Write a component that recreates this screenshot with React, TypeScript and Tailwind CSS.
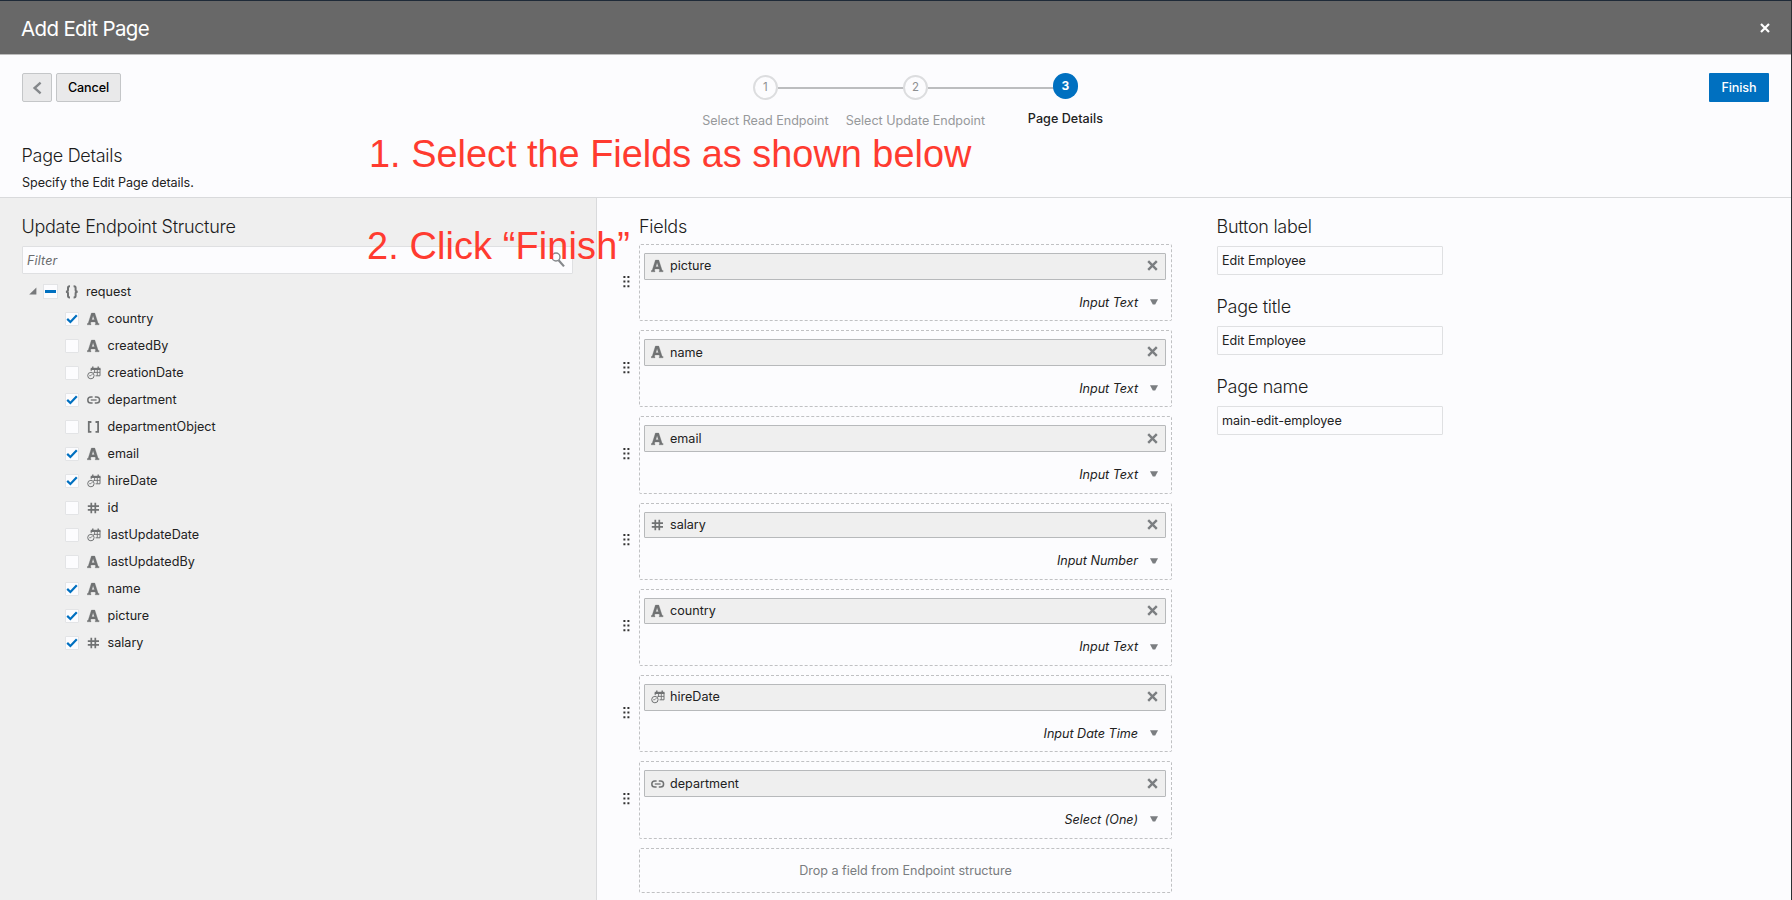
import React from "react";

type Kind = "text" | "date" | "link" | "array" | "number" | "object";

function KindIcon({ kind }: { kind: Kind }) {
  const c = "#707273";
  return (
    <svg width="14" height="14" viewBox="0 0 14 14" fill="none" stroke={c} className="block shrink-0">
      {kind === "text" && (
        <path
          d="M4.4 1.1H7.8L11.2 11.6H12.1V12.8H8.2V11.7H8.8L8.2 9.9H3.9L3.4 11.7H4V12.8H0.2V11.6H1.1ZM6.1 3.8L4.8 7.7H7.4Z"
          fill={c}
          fillRule="evenodd"
          stroke={c}
          strokeWidth="0.3"
        />
      )}
      {kind === "date" && (
        <g strokeWidth="1">
          <path d="M4.2 5.2V2.6H13V9.8H8.6" />
          <path d="M3.8 2.9H13.4" strokeWidth="2.2" />
          <path d="M5.8 0.6V2.6M11.2 0.6V2.6" strokeWidth="1.4" />
          <path d="M6.4 6.4H13M7.6 4V7M10.3 4V9.6" strokeWidth="0.9" />
          <circle cx="3.9" cy="9.6" r="3.2" />
          <path d="M5.6 7.9L3.9 9.7H2.2" strokeWidth="0.8" />
        </g>
      )}
      {kind === "link" && (
        <g strokeWidth="1.5">
          <path d="M5.6 3.9H3.9a3.1 3.1 0 0 0 0 6.2H5.6" />
          <path d="M7.8 3.9H9.5a3.1 3.1 0 0 1 0 6.2H7.8" />
          <path d="M3.8 7H9.6" strokeWidth="1.3" />
        </g>
      )}
      {kind === "array" && (
        <g strokeWidth="1.8">
          <path d="M4.4 2H1.8V11.8H4.4" />
          <path d="M8.5 2H11.1V11.8H8.5" />
        </g>
      )}
      {kind === "number" && (
        <g strokeWidth="1.7">
          <path d="M4.3 1.7V12.2M8.3 1.7V12.2M0.8 5.1H12M0.8 8.8H12" />
        </g>
      )}
      {kind === "object" && (
        <g strokeWidth="2">
          <path d="M5 1.2H4.6Q3 1.2 3 2.8V5Q3 6.8 0.9 6.8Q3 6.8 3 8.6V10.8Q3 12.4 4.6 12.4H5" />
          <path d="M8.6 1.2H9Q10.6 1.2 10.6 2.8V5Q10.6 6.8 12.7 6.8Q10.6 6.8 10.6 8.6V10.8Q10.6 12.4 9 12.4H8.6" />
        </g>
      )}
    </svg>
  );
}

const tree: { name: string; kind: Kind; on: boolean }[] = [
  { name: "country", kind: "text", on: true },
  { name: "createdBy", kind: "text", on: false },
  { name: "creationDate", kind: "date", on: false },
  { name: "department", kind: "link", on: true },
  { name: "departmentObject", kind: "array", on: false },
  { name: "email", kind: "text", on: true },
  { name: "hireDate", kind: "date", on: true },
  { name: "id", kind: "number", on: false },
  { name: "lastUpdateDate", kind: "date", on: false },
  { name: "lastUpdatedBy", kind: "text", on: false },
  { name: "name", kind: "text", on: true },
  { name: "picture", kind: "text", on: true },
  { name: "salary", kind: "number", on: true },
];

const fields: { name: string; kind: Kind; control: string }[] = [
  { name: "picture", kind: "text", control: "Input Text" },
  { name: "name", kind: "text", control: "Input Text" },
  { name: "email", kind: "text", control: "Input Text" },
  { name: "salary", kind: "number", control: "Input Number" },
  { name: "country", kind: "text", control: "Input Text" },
  { name: "hireDate", kind: "date", control: "Input Date Time" },
  { name: "department", kind: "link", control: "Select (One)" },
];

const details = [
  { label: "Button label", value: "Edit Employee" },
  { label: "Page title", value: "Edit Employee" },
  { label: "Page name", value: "main-edit-employee" },
];

function Heading({ children }: { children: React.ReactNode }) {
  return <h2 className="-ml-[0.5px] text-[18px] leading-6 font-light tracking-[-0.27px] whitespace-nowrap text-[#1c1c1c]">{children}</h2>;
}

function CheckBox({ on }: { on: boolean }) {
  return (
    <span className="flex h-3.5 w-3.5 shrink-0 items-center justify-center rounded-[1px] border border-[#e3e4e6] bg-[#fcfcfe]">
      {on && (
        <svg width="12" height="12" viewBox="0 0 12 12" fill="none" className="block shrink-0">
          <path d="M1.2 5.9L4.4 9L10.8 2.2" stroke="#0070c0" strokeWidth="2.2" />
        </svg>
      )}
    </span>
  );
}

function Header() {
  return (
    <header className="flex h-[55px] items-center justify-between border-t border-b border-t-[#1e2a38] border-b-[#bcbcbc] bg-[#686868] pr-[21px] pl-[21px]">
      <h1 className="pt-0.5 text-[20.5px] leading-7 tracking-[-0.65px] text-white">Add Edit Page</h1>
      <svg width="10" height="10" viewBox="0 0 10 10" className="mt-px block" stroke="#fff" strokeWidth="2.2">
        <path d="M1 1L9 9M9 1L1 9" />
      </svg>
    </header>
  );
}

function Step({ n, label }: { n: number; label: string }) {
  return (
    <li className="flex w-[150px] flex-col items-center pt-0.5">
      <span className="z-10 flex h-[25px] w-[25px] items-center justify-center rounded-full border-2 border-[#dcdddf] bg-[#fcfcfe] pt-px text-[11.5px] text-[#8d8f91]">
        {n}
      </span>
      <span className="mt-[13px] text-[12.6px] leading-4 tracking-[-0.03px] whitespace-nowrap text-[#97999b]">{label}</span>
    </li>
  );
}

function Toolbar() {
  return (
    <section className="relative h-[143px] border-b border-[#d9dadc] px-[22px] pt-[18px]">
      <div className="flex items-start justify-between">
        <div className="flex w-[668.4px] gap-1">
          <button className="flex h-[29px] w-[30px] items-center justify-center rounded-[2px] border border-[#c4c6c8] bg-[#e9e9ea]">
            <svg width="10" height="14" viewBox="0 0 10 14" fill="none" className="block">
              <path d="M8.6 1.6L2.6 7L8.6 12.4" stroke="#85888b" strokeWidth="2.4" />
            </svg>
          </button>
          <button className="h-[29px] w-[65px] rounded-[2px] border border-[#c4c6c8] bg-[#e9e9ea] pt-0.5 text-[12.6px] font-medium tracking-[-0.1px] text-black">
            Cancel
          </button>
        </div>
        <ol className="relative flex w-[450px]">
          <span className="absolute top-[14px] left-[88px] h-0.5 w-[126px] bg-[#bcbdbf]" />
          <span className="absolute top-[14px] left-[238px] h-0.5 w-[126px] bg-[#bcbdbf]" />
          <Step n={1} label="Select Read Endpoint" />
          <Step n={2} label="Select Update Endpoint" />
          <li className="flex w-[150px] flex-col items-center">
            <span className="z-10 flex h-[26px] w-[25px] items-center justify-center rounded-full bg-[#0070c0] text-[12px] font-bold text-white">3</span>
            <span className="mt-[12px] text-[12.6px] leading-4 font-medium tracking-[0.02px] whitespace-nowrap text-[#222]">Page Details</span>
          </li>
        </ol>
        <div className="flex w-[628.6px] justify-end">
          <button className="h-[29px] w-[60px] rounded-[1px] bg-[#0070c0] pt-0.5 text-[12.6px] font-medium tracking-[-0.1px] text-white">Finish</button>
        </div>
      </div>
      <div className="mt-[15px]">
        <Heading>Page Details</Heading>
        <p className="mt-[7px] text-[12.6px] leading-4 tracking-[-0.06px] text-[#222]">Specify the Edit Page details.</p>
      </div>
      <p className="absolute top-[77px] left-[369px] z-20 font-['Liberation_Sans',sans-serif] text-[37.9px] leading-[44px] whitespace-nowrap text-[#ff3b30]">
        1. Select the Fields as shown below
      </p>
      <p className="absolute top-[169px] left-[367px] z-20 font-['Liberation_Sans',sans-serif] text-[37.9px] leading-[44px] tracking-[0.12px] whitespace-nowrap text-[#ff3b30]">
        2. Click “Finish”
      </p>
    </section>
  );
}

function Structure() {
  return (
    <aside className="w-[597px] shrink-0 border-r border-[#d9dadc] bg-[#efefef] pt-[17px] pl-[22px]">
      <Heading>Update Endpoint Structure</Heading>
      <div className="mt-[7px] flex h-[28px] w-[551px] items-center justify-between rounded-[1px] border border-[#dfe0e2] bg-[#fcfcfe] pr-[7px] pl-1">
        <span className="pt-0.5 text-[12.6px] tracking-[0.1px] text-[#6b6d6f] italic">Filter</span>
        <svg width="14" height="16" viewBox="0 0 14 16" fill="none" stroke="#85888b" className="block">
          <circle cx="5" cy="5" r="4" strokeWidth="1.4" />
          <path d="M7.6 8.2L13 14.4" strokeWidth="2.2" />
        </svg>
      </div>
      <div className="mt-[4px] flex h-[27px] items-center">
        <svg width="8" height="8" viewBox="0 0 8 8" className="mb-0.5 ml-[7px] block">
          <path d="M7.4 0.4V7.4H0.2Z" fill="#77797b" />
        </svg>
        <span className="ml-[6px] flex h-[15px] w-[15px] items-center justify-center border border-[#e3e4e6] bg-[#fcfcfe]">
          <span className="h-[3px] w-[11px] bg-[#0070c0]" />
        </span>
        <span className="mr-[7px] ml-[7px]">
          <KindIcon kind="object" />
        </span>
        <span className="pt-0.5 text-[12.6px] text-[#222]">request</span>
      </div>
      {tree.map((t) => (
        <div key={t.name} className="flex h-[27px] items-center pl-[43px]">
          <CheckBox on={t.on} />
          <span className="mr-[6.6px] ml-[8px]">
            <KindIcon kind={t.kind} />
          </span>
          <span className="pt-0.5 text-[12.6px] text-[#222]">{t.name}</span>
        </div>
      ))}
    </aside>
  );
}

function Fields() {
  return (
    <section className="w-[550px] shrink-0 pt-[17px]">
      <div className="pl-[16.5px]">
        <Heading>Fields</Heading>
      </div>
      <div className="mt-[5px] flex flex-col gap-[9px]">
        {fields.map((f) => (
          <div key={f.name} className="flex h-[77.23px]">
            <svg width="16" height="12" viewBox="0 0 16 12" fill="#333" className="mt-[31.5px] block">
              <path d="M0.4 0h2v2H0.4zM4.4 0h2v2H4.4zM0.4 4.6h2v2H0.4zM4.4 4.6h2v2H4.4zM0.4 9.2h2v2H0.4zM4.4 9.2h2v2H4.4z" />
            </svg>
            <div className="w-[533px] rounded-[2px] border border-dashed border-[#c0c1c3] pt-2 pl-1">
              <div className="flex h-[26.5px] w-[522px] items-center rounded-[1px] border border-[#b7b9bb] bg-[#efefef] pr-[7.5px] pl-[6px]">
                <KindIcon kind={f.kind} />
                <span className="ml-[5px] grow pt-px text-[12.6px] text-[#222]">{f.name}</span>
                <svg width="11" height="11" viewBox="0 0 11 11" stroke="#7b7e81" strokeWidth="2.4" className="mb-px block">
                  <path d="M1.2 1.2L9.8 9.8M9.8 1.2L1.2 9.8" />
                </svg>
              </div>
              <div className="mt-[13px] flex h-5 items-center justify-end pr-[13px]">
                <span className="pt-px text-[12.6px] tracking-[-0.02px] text-[#222] italic">{f.control}</span>
                <svg width="8" height="6" viewBox="0 0 8 6" className="mb-px ml-[12px] block">
                  <path d="M0 0.3H8L5.2 5.4H2.8Z" fill="#7b7e81" />
                </svg>
              </div>
            </div>
          </div>
        ))}
        <div className="ml-4 flex h-[45px] w-[533px] items-center justify-center rounded-[2px] border border-dashed border-[#c0c1c3] pt-0.5 text-[12.6px] tracking-[-0.02px] text-[#7a7d80]">
          Drop a field from Endpoint structure
        </div>
      </div>
    </section>
  );
}

function Details() {
  return (
    <section className="ml-[44px] flex w-[226px] flex-col gap-5 pt-[17px]">
      {details.map((d) => (
        <div key={d.label}>
          <Heading>{d.label}</Heading>
          <div className="mt-[7px] flex h-[29px] items-center rounded-[1px] border border-[#dfe0e2] pt-px pl-1 text-[12.6px] tracking-[-0.02px] text-[#222]">
            {d.value}
          </div>
        </div>
      ))}
    </section>
  );
}

export default function App() {
  return (
    <div className="flex h-[900px] w-[1792px] flex-col overflow-hidden border-r border-[#2b2f33] bg-[#fcfcfe] font-['Inter',sans-serif]">
      <Header />
      <Toolbar />
      <main className="flex grow">
        <Structure />
        <div className="flex pl-[26px]">
          <Fields />
          <Details />
        </div>
      </main>
    </div>
  );
}
